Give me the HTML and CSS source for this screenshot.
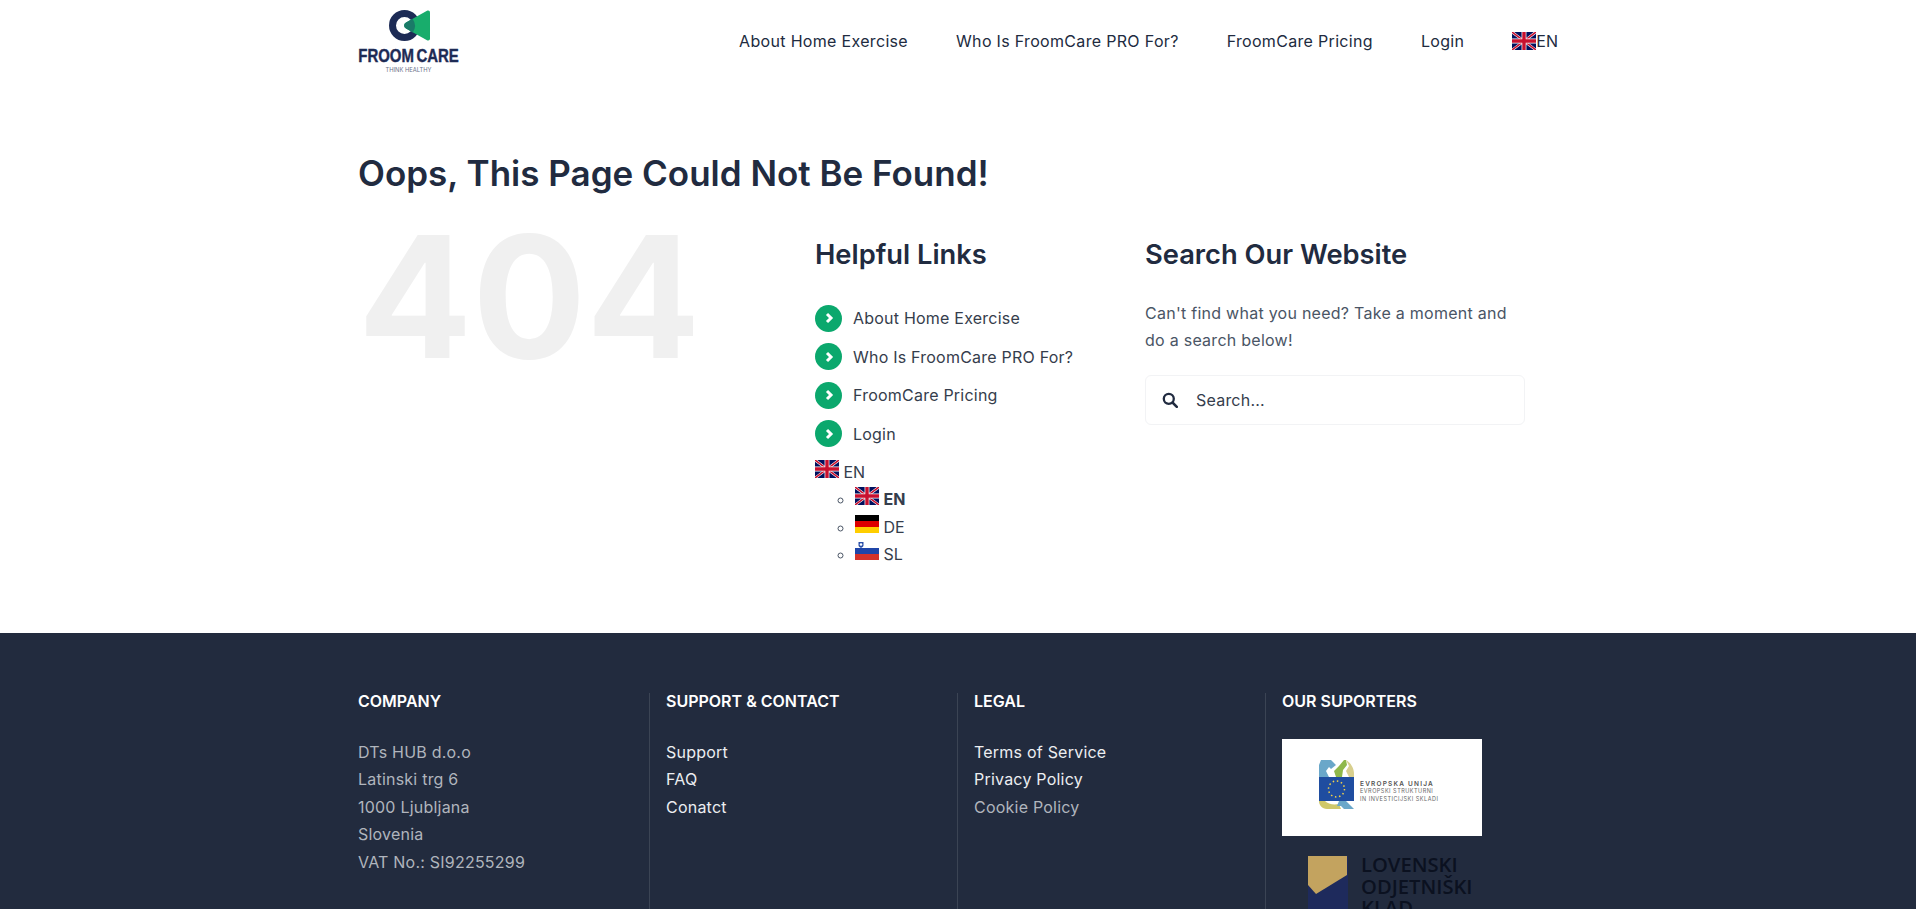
FILE: index.html
```html
<!DOCTYPE html>
<html lang="en">
<head>
<meta charset="utf-8">
<title>Page not found - FroomCare</title>
<link rel="stylesheet" href="styles.css">
</head>
<body>
<svg class="defs" width="0" height="0" aria-hidden="true">
  <symbol id="uk" viewBox="0 0 24 18">
    <rect width="24" height="18" fill="#00105e"/>
    <path d="M0 0L24 18M24 0L0 18" stroke="#fff" stroke-width="2.600"/>
    <path d="M0 0L24 18M24 0L0 18" stroke="#c8102e" stroke-width="1.500"/>
    <path d="M12 0V18M0 9H24" stroke="#fff" stroke-width="4.800"/>
    <path d="M12 0V18M0 9H24" stroke="#c8102e" stroke-width="3.400"/>
  </symbol>
  <symbol id="de" viewBox="0 0 24 18">
    <rect width="24" height="6" fill="#000"/>
    <rect y="6" width="24" height="6" fill="#dd0000"/>
    <rect y="12" width="24" height="6" fill="#ffce00"/>
  </symbol>
  <symbol id="sl" viewBox="0 0 24 18">
    <rect y="6" width="24" height="6" fill="#1f45a8"/>
    <rect y="12" width="24" height="6" fill="#d4322a"/>
    <path d="M3.500 0h5v3.500c0 1.200-1.500 2-2.500 2.500C5 5.500 3.500 4.700 3.500 3.500z" fill="#2a4fa8"/>
    <circle cx="6" cy="2.500" r="1.300" fill="#fff"/>
  </symbol>
  <symbol id="chev" viewBox="0 0 10 12">
    <path d="M3 2l4 4-4 4" fill="none" stroke="#fff" stroke-width="3"/>
  </symbol>
</svg>

<header class="site-header">
  <div class="logo">
    <svg class="logo-mark" viewBox="0 0 41 31" width="41" height="31" aria-hidden="true">
      <circle cx="15.500" cy="15.500" r="12" fill="none" stroke="#1d2b55" stroke-width="7"/>
      <path d="M38 .8c1.800-.8 3 .2 3 2v25.400c0 1.800-1.200 2.800-3 2L17 18.500c-2.500-1.500-2.500-4.500 0-6z" fill="#18ad6c"/>
      <path d="M23.500 8.800a12 12 0 0 1 .3 13.700L17 18.500c-2.500-1.500-2.500-4.500 0-6z" fill="#1a7a68"/>
    </svg>
    <div class="logo-name">FROOM CARE</div>
    <div class="logo-tag">THINK HEALTHY</div>
  </div>
  <nav class="main-nav">
    <a href="#">About Home Exercise</a>
    <a href="#">Who Is FroomCare PRO For?</a>
    <a href="#">FroomCare Pricing</a>
    <a href="#">Login</a>
    <a href="#" class="nav-lang"><svg class="flag"><use href="#uk"/></svg>EN</a>
  </nav>
</header>

<main class="content">
  <h1 class="page-title">Oops, This Page Could Not Be Found!</h1>
  <div class="columns">
    <div class="col-404">404</div>
    <section class="col-links">
      <h2>Helpful Links</h2>
      <ul class="links">
        <li><span class="bullet"><svg class="chev"><use href="#chev"/></svg></span>About Home Exercise</li>
        <li><span class="bullet"><svg class="chev"><use href="#chev"/></svg></span>Who Is FroomCare PRO For?</li>
        <li><span class="bullet"><svg class="chev"><use href="#chev"/></svg></span>FroomCare Pricing</li>
        <li><span class="bullet"><svg class="chev"><use href="#chev"/></svg></span>Login</li>
      </ul>
      <div class="lang-top"><svg class="flag"><use href="#uk"/></svg> EN</div>
      <ul class="lang-list">
        <li><svg class="flag"><use href="#uk"/></svg> <strong>EN</strong></li>
        <li><svg class="flag"><use href="#de"/></svg> DE</li>
        <li><svg class="flag"><use href="#sl"/></svg> SL</li>
      </ul>
    </section>
    <section class="col-search">
      <h2>Search Our Website</h2>
      <p>Can't find what you need? Take a moment and do a search below!</p>
      <div class="search-box">
        <svg class="search-icon" viewBox="0 0 16 16" aria-hidden="true"><circle cx="6.800" cy="6.800" r="5" fill="none" stroke="#212b40" stroke-width="2.300"/><path d="M10.500 10.500L14.800 14.800" stroke="#212b40" stroke-width="2.500" stroke-linecap="round"/></svg>
        <span>Search...</span>
      </div>
    </section>
  </div>
</main>

<footer class="site-footer">
  <div class="footer-grid">
    <div class="fcol">
      <h3>COMPANY</h3>
      <ul class="muted">
        <li>DTs HUB d.o.o</li>
        <li>Latinski trg 6</li>
        <li>1000 Ljubljana</li>
        <li>Slovenia</li>
        <li>VAT No.: SI92255299</li>
      </ul>
    </div>
    <div class="fcol">
      <h3>SUPPORT &amp; CONTACT</h3>
      <ul>
        <li>Support</li>
        <li>FAQ</li>
        <li>Conatct</li>
      </ul>
    </div>
    <div class="fcol">
      <h3>LEGAL</h3>
      <ul>
        <li>Terms of Service</li>
        <li>Privacy Policy</li>
        <li class="dim">Cookie Policy</li>
      </ul>
    </div>
    <div class="fcol">
      <h3>OUR SUPORTERS</h3>
      <div class="eu-logo">
        <svg class="eu-mark" viewBox="0 0 35 49" aria-hidden="true">
          <path d="M2 0h10l5 5-5 4-2-2-3 4 3 6H0V5z" fill="#6aa7c9"/>
          <path d="M17 17l-2-6 5-5 5-6h2l1 5-4 5-1 7z" fill="#8fb84a"/>
          <path d="M27 0c4 2 8 8 8 13v4h-5l-3-6 3-5z" fill="#d8cf8e"/>
          <rect y="17" width="35" height="24" fill="#1f4da0"/>
          <circle cx="17.500" cy="29" r="8" fill="none" stroke="#f3d34a" stroke-width="1.500" stroke-dasharray="1.500 2.700"/>
          <path d="M0 41h6c3 3 8 4 14 3l2 5H8c-5 0-8-4-8-8z" fill="#cfc86a"/>
          <path d="M20 41h7l8 8H25l-3-3h-4z" fill="#6aa7c9"/>
        </svg>
        <div class="eu-text">
          <div class="eu-title">EVROPSKA UNIJA</div>
          <div>EVROPSKI STRUKTURNI</div>
          <div>IN INVESTICIJSKI SKLADI</div>
        </div>
      </div>
      <div class="sklad-logo">
        <svg class="sklad-mark" viewBox="0 0 40 60" aria-hidden="true">
          <rect y="0" width="40" height="60" fill="#1e2a5c"/>
          <path d="M0 0H39V19L8 38 0 29z" fill="#c3a35f"/>
        </svg>
        <div class="sklad-text">LOVENSKI<br>ODJETNIŠKI<br>KLAD</div>
      </div>
    </div>
  </div>
</footer>
</body>
</html>
```
FILE: styles.css
```css
* { box-sizing: border-box; }
html, body { margin: 0; height: 909px; overflow: hidden; }
body { font-family: Inter, "Liberation Sans", sans-serif; font-size: 16px; letter-spacing: .22px; color: #212b40; background: #fff; }
.defs { position: absolute; }
a { color: inherit; text-decoration: none; }
ul { list-style: none; margin: 0; padding: 0; }
.flag { width: 24px; height: 18px; display: inline-block; }

.site-header { width: 1200px; margin: 0 auto; height: 84px; display: flex; justify-content: space-between; }
.logo { width: 101px; padding-top: 10px; display: flex; flex-direction: column; align-items: center; letter-spacing: 0; }
.logo-mark { display: block; margin-left: 2px; }
.logo-name { font-family: "Liberation Sans", sans-serif; font-weight: 700; font-size: 18px; line-height: 14px; margin-top: 8px; color: #1d2b55; white-space: nowrap; transform: scaleX(.83); word-spacing: -2px; -webkit-text-stroke: .4px #1d2b55; }
.logo-tag { font-size: 5.800px; line-height: 7px; color: #6b7189; margin-top: 3px; }
.main-nav { display: flex; gap: 48px; align-items: flex-start; padding-top: 31px; line-height: 20px; letter-spacing: .32px; }
.nav-lang { display: flex; align-items: center; letter-spacing: 0; }

.content { width: 1200px; margin: 0 auto; height: 549px; padding-top: 67px; }
.page-title { margin: 0; font-size: 35px; line-height: 44px; font-weight: 600; letter-spacing: 0; }
.columns { display: grid; grid-template-columns: 457px 330px 380px; margin-top: 25px; }
.col-404 { font-size: 169px; line-height: 169px; font-weight: 700; color: #f0f0f0; padding-left: 0; letter-spacing: 0; margin-top: -8px; }
h2 { margin: 0; font-size: 27.300px; line-height: 36px; font-weight: 600; letter-spacing: 0; }
.col-links h2, .col-search h2 { margin-top: 17px; }
.links { margin-top: 26px; }
.links li { display: flex; align-items: center; height: 38.500px; color: #353d4c; }
.bullet { width: 27px; height: 27px; border-radius: 50%; background: #0ba86d; display: flex; align-items: center; justify-content: center; margin-right: 11px; }
.chev { width: 10px; height: 12px; }
.lang-top { line-height: 27px; color: #353d4c; margin-top: 6px; letter-spacing: 0; }
.lang-list { list-style: circle; padding-left: 40px; color: #353d4c; letter-spacing: 0; }
.lang-list li { line-height: 27.500px; }
.lang-list li::marker { color: #4a5565; }
.col-search p { margin: 27px 0 0; line-height: 27px; color: #4a5565; letter-spacing: .26px; }
.search-box { margin-top: 21px; height: 50px; border: 1px solid #f2f3f5; border-radius: 6px; display: flex; align-items: center; padding-left: 16px; color: #353d4c; }
.search-icon { width: 16px; height: 16px; margin-right: 18px; }

.site-footer { background: #222b3e; height: 300px; padding-top: 60px; }
.footer-grid { width: 1234px; margin: 0 auto; display: grid; grid-template-columns: repeat(4, 308px); }
.fcol { padding: 0 16px; border-left: 1px solid #3b4454; height: 240px; }
.fcol:first-child { border-left: 0; padding-left: 17px; }
.fcol h3 { margin: 0 0 30px; font-size: 16px; line-height: 16px; font-weight: 600; color: #fff; letter-spacing: 0; }
.fcol li { line-height: 27.400px; color: #eceef1; }
.fcol .muted li, .fcol .dim { color: #b0b5bd; }
.eu-logo { width: 200px; height: 97px; background: #fff; display: flex; align-items: center; padding-left: 37px; margin-top: 5px; letter-spacing: 0; }
.eu-mark { width: 35px; height: 49px; flex: none; margin-bottom: 7px; }
.eu-text { font-size: 5.500px; line-height: 7.500px; color: #666; margin: 9px 0 0 6px; white-space: nowrap; letter-spacing: .5px; }
.eu-title { font-size: 6.500px; font-weight: 600; letter-spacing: 1.200px; color: #555; }
.sklad-logo { display: flex; margin: 20px 0 0 26px; }
.sklad-mark { width: 40px; height: 60px; flex: none; }
.sklad-text { font-family: "Open Sans", sans-serif; font-weight: 600; font-size: 20.200px; line-height: 21.700px; color: #0b1120; margin: -2px 0 0 13px; letter-spacing: 0; }
```
